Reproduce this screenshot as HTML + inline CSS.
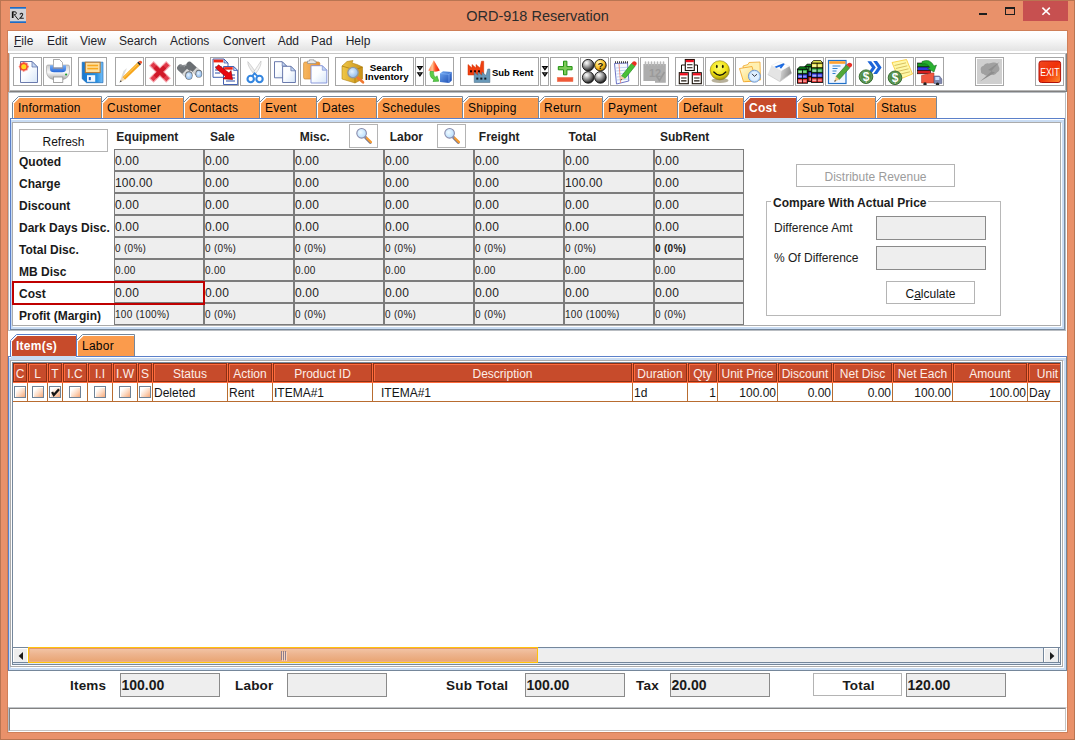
<!DOCTYPE html>
<html><head><meta charset="utf-8"><title>ORD-918 Reservation</title>
<style>
*{box-sizing:border-box;margin:0;padding:0}
html,body{width:1075px;height:740px;overflow:hidden}
body{background:#e9916a;font-family:"Liberation Sans",sans-serif;font-size:12px;color:#1c1c1c;position:relative}
.abs{position:absolute}
#frame{position:absolute;left:0;top:0;width:1075px;height:740px;border:1px solid #b97552}
#title{position:absolute;left:0;top:6px;width:1075px;text-align:center;font-size:14.5px;color:#2c2c2c;line-height:20px;transform:scaleY(1.06);transform-origin:50% 78%}
#menubar{position:absolute;left:8px;top:31px;width:1059px;height:22px;background:linear-gradient(#ffffff 0%,#fbfbfb 30%,#e3e3e3 90%,#ffffff 93%)}
#menubar span{position:absolute;top:3px;line-height:14px;font-size:12px;color:#1f1f2a}
#toolbar{position:absolute;left:9px;top:53px;width:1058px;height:39px;background:#fff;border:1px solid;border-color:#c6c6c6 #7c8084 #808080 #c6c6c6;box-shadow:inset -1px -1px 0 #b6b6b6}
.tb{position:absolute;top:57px;width:29px;height:29px;border:1px solid #a6a6a6;background:#fff;overflow:hidden}
.tb svg{position:absolute;left:-1px;top:-1px}
#client{position:absolute;left:8px;top:92px;width:1059px;height:640px;background:#fff}
.tabt{font-size:12px;line-height:14px;white-space:nowrap;color:#050505;letter-spacing:0.25px}
.btn{border:1px solid #b4b4b4;background:#fff;text-align:center;white-space:nowrap;color:#141414}
.hd{font-weight:bold;font-size:12px;line-height:14px;white-space:nowrap;color:#222}
.rl{font-weight:bold;font-size:12px;line-height:14px;white-space:nowrap;color:#1a1a1a}
.cell{width:90px;height:22px;border:1px solid #7c7c7c;background:#eeeeee;font-size:12px;line-height:22px;padding-left:0px;white-space:nowrap;color:#222;overflow:visible;letter-spacing:0.15px}
.cell.sm{font-size:10px;line-height:21px;letter-spacing:0.3px}
.fld{border:1px solid #8a8a8a;background:#eeeeee}
.fv{font-weight:bold;font-size:14px;line-height:23px;padding-left:0.5px;color:#1a1a1a}
.fl{font-weight:bold;font-size:13.5px;line-height:16px;white-space:nowrap;color:#1a1a1a;letter-spacing:0.2px}
.th{height:19px;background:#c74b2b;border:1px solid #8c3014;box-shadow:inset 1px 1px 0 #ff6b3d;color:#fdeee8;text-align:center;font-size:12px;line-height:20px;white-space:nowrap;overflow:hidden}
.td{height:18px;border-right:1px solid #b86c30;font-size:12px;line-height:20px;white-space:nowrap;overflow:hidden;color:#141414}
.cb{width:12px;height:12px;border:1px solid #6f8296;background:linear-gradient(135deg,#ffffff 22%,#fddcc6 58%,#f6a878 100%);box-shadow:inset 1px 1px 0 #fff}
.sbb{width:15px;height:15px;background:#f2f2f2;border:1px solid #fff;outline:1px solid #9fb1cc;outline-offset:-1px}

</style></head><body>
<div id="frame"></div>
<div class="abs" style="left:7px;top:30px;width:1061px;height:703px;background:#cf7f58"></div>
<svg class="abs" style="left:10px;top:7px" width="16" height="16" viewBox="0 0 16 16"><rect width="16" height="16" fill="#d2d2d6"/><rect width="16" height="1.7" fill="#1c6cc6"/><rect y="14.3" width="16" height="1.7" fill="#1c6cc6"/><path d="M2.7,4.4 V11" stroke="#101010" stroke-width="1.7"/><path d="M3,4.8 H5 Q6.6,5 6.4,6.4 Q6.2,7.6 4.2,7.6 L8.6,13" fill="none" stroke="#202020" stroke-width="1"/><path d="M9.8,7.4 Q11.4,5.6 12.6,6.8 Q13.2,8 10,11.2 H13.8" fill="none" stroke="#202020" stroke-width="1.1"/></svg>
<div id="title">ORD-918 Reservation</div>
<div class="abs" style="left:979px;top:13px;width:8px;height:2px;background:#1e1e1e"></div>
<div class="abs" style="left:1005px;top:7px;width:10px;height:8px;border:1px solid #1e1e1e;border-top-width:2px"></div>
<div class="abs" style="left:1023px;top:1px;width:45px;height:20px;background:#c75050"></div>
<svg class="abs" style="left:1041px;top:6px" width="10" height="10" viewBox="0 0 10 10"><path d="M1.4,1.6 L8.8,8.8 M8.8,1.6 L1.4,8.8" stroke="#fff" stroke-width="1.6"/></svg>
<div id="menubar"><span style="left:6px"><u>F</u>ile</span><span style="left:39px">Edit</span><span style="left:72px">View</span><span style="left:111px">Search</span><span style="left:162px">Actions</span><span style="left:215px">Convert</span><span style="left:269.7px">Add</span><span style="left:303px">Pad</span><span style="left:337.7px">Help</span></div>
<div id="toolbar"></div>
<div id="client"></div>

<svg width="0" height="0" style="position:absolute">
<defs>
<linearGradient id="gPage" x1="0" y1="0" x2="1" y2="1"><stop offset="0" stop-color="#ffffff"/><stop offset="0.45" stop-color="#fbfdff"/><stop offset="1" stop-color="#d6e5f8"/></linearGradient>
<radialGradient id="gStar"><stop offset="0" stop-color="#fff040"/><stop offset="0.35" stop-color="#ffb020"/><stop offset="0.6" stop-color="#f03020"/><stop offset="1" stop-color="#f03020" stop-opacity="0"/></radialGradient>
<linearGradient id="gPrn" x1="0" y1="0" x2="0" y2="1"><stop offset="0" stop-color="#c8c8c8"/><stop offset="0.5" stop-color="#fafafa"/><stop offset="1" stop-color="#a8a8a8"/></linearGradient>
<linearGradient id="gBlue" x1="0" y1="0" x2="0" y2="1"><stop offset="0" stop-color="#78b0f8"/><stop offset="1" stop-color="#2868d8"/></linearGradient>
<linearGradient id="gFlop" x1="0" y1="0" x2="1" y2="0"><stop offset="0" stop-color="#1878d0"/><stop offset="0.7" stop-color="#2890e0"/><stop offset="1" stop-color="#78c0f8"/></linearGradient>
<radialGradient id="gBall" cx="0.36" cy="0.3" r="0.75"><stop offset="0" stop-color="#ffffff"/><stop offset="0.22" stop-color="#d4d4d4"/><stop offset="0.6" stop-color="#787878"/><stop offset="1" stop-color="#0c0c0c"/></radialGradient>
<radialGradient id="gBallY" cx="0.36" cy="0.3" r="0.75"><stop offset="0" stop-color="#fffce0"/><stop offset="0.3" stop-color="#ffdc60"/><stop offset="0.7" stop-color="#f0b018"/><stop offset="1" stop-color="#705000"/></radialGradient>
<radialGradient id="gSmile" cx="0.45" cy="0.35" r="0.7"><stop offset="0" stop-color="#ffff70"/><stop offset="0.6" stop-color="#f0e010"/><stop offset="1" stop-color="#8a7a10"/></radialGradient>
<radialGradient id="gLens" cx="0.4" cy="0.4" r="0.7"><stop offset="0" stop-color="#e8f4ff"/><stop offset="1" stop-color="#80b0e8"/></radialGradient>
<radialGradient id="gLens2" cx="0.4" cy="0.4" r="0.75"><stop offset="0" stop-color="#f0faff"/><stop offset="0.6" stop-color="#c6e6ff"/><stop offset="1" stop-color="#a4d0f8"/></radialGradient>
<linearGradient id="gExit" x1="0" y1="0" x2="1" y2="1"><stop offset="0" stop-color="#f04820"/><stop offset="0.5" stop-color="#f03008"/><stop offset="1" stop-color="#ff9030"/></linearGradient>
<linearGradient id="gClip" x1="0" y1="0" x2="1" y2="0"><stop offset="0" stop-color="#f8b860"/><stop offset="1" stop-color="#e89030"/></linearGradient>
<linearGradient id="gBox" x1="0" y1="0" x2="1" y2="0"><stop offset="0" stop-color="#f0c848"/><stop offset="1" stop-color="#c89018"/></linearGradient>
<linearGradient id="gCone" x1="0" y1="0" x2="1" y2="0"><stop offset="0" stop-color="#ff7848"/><stop offset="0.35" stop-color="#ffc090"/><stop offset="0.6" stop-color="#ff5828"/><stop offset="1" stop-color="#e01808"/></linearGradient>
<linearGradient id="gCube" x1="0" y1="0" x2="1" y2="1"><stop offset="0" stop-color="#70a8f0"/><stop offset="1" stop-color="#1848b0"/></linearGradient>
<linearGradient id="gKeyR" x1="0" y1="0" x2="1" y2="0.3"><stop offset="0" stop-color="#e0e0e0"/><stop offset="1" stop-color="#8c8c8c"/></linearGradient>
<linearGradient id="gKey" x1="0" y1="0" x2="1" y2="1"><stop offset="0" stop-color="#ffffff"/><stop offset="1" stop-color="#b0b0b0"/></linearGradient>
<linearGradient id="gFold" x1="0" y1="0" x2="1" y2="1"><stop offset="0" stop-color="#fffce0"/><stop offset="1" stop-color="#ffd860"/></linearGradient>
</defs></svg>
<div class="tb" style="left:13px;width:29px;"><svg width="29" height="29" viewBox="13 57 29 29"><path d="M20.5,61.5 L32,61.5 L37.5,67 L37.5,82.5 L20.5,82.5 Z" fill="url(#gPage)" stroke="#5a6ca4" stroke-width="0.9"/><path d="M32,61.5 L32,67 L37.5,67 Z" fill="#c4d8f4" stroke="#5a6ca4" stroke-width="0.7"/><circle cx="23.8" cy="66.6" r="5.4" fill="url(#gStar)" opacity="0.8"/><path d="M23.8,61.2 l1.2,2.6 l2.7,-1 l-1,2.7 l2.6,1.2 l-2.6,1.2 l1,2.7 l-2.7,-1 l-1.2,2.6 l-1.2,-2.6 l-2.7,1 l1,-2.7 l-2.6,-1.2 l2.6,-1.2 l-1,-2.7 l2.7,1 Z" fill="#f8381c" opacity="0.6"/><circle cx="23.8" cy="66.7" r="2.5" fill="#ffd820"/></svg></div>
<div class="tb" style="left:43px;width:29px;"><svg width="29" height="29" viewBox="43 57 29 29"><path d="M53.5,59.5 H59.5 L62.5,62.5 V69 H53.5 Z" fill="#fff" stroke="#a0a0a0" stroke-width="0.8"/><path d="M46.5,66.5 Q46.5,65 48,65 H68 Q69.5,65 69.5,66.5 V71 Q69.5,78 63,79.5 H53 Q46.5,78 46.5,71 Z" fill="url(#gPrn)" stroke="#9a9a9a" stroke-width="0.6"/><path d="M50,65.3 H66 V69 Q66,72.2 62,72.2 H54 Q50,72.2 50,69 Z" fill="url(#gBlue)"/><rect x="53.5" y="62" width="9" height="6" fill="#fff"/><path d="M53.5,59.5 H59.5 L62.5,62.5 V68 M53.5,68 V59.5" fill="none" stroke="#a8a8a8" stroke-width="0.8"/><rect x="53" y="67.3" width="10" height="1.6" fill="#8890a8"/><rect x="53.5" y="77" width="9.3" height="5.5" fill="#fff" stroke="#909090" stroke-width="0.8"/><circle cx="66.1" cy="74.5" r="1.1" fill="#20a030"/></svg></div>
<div class="tb" style="left:78px;width:29px;"><svg width="29" height="29" viewBox="78 57 29 29"><path d="M82.2,62.2 H103 V82.7 H86.5 L82.2,78.8 Z" fill="url(#gFlop)" stroke="#1060b0" stroke-width="0.6"/><rect x="85.3" y="62.2" width="14.8" height="10.4" fill="#ffe0a0" stroke="#b87830" stroke-width="1"/><rect x="87.3" y="64.7" width="10.8" height="1.6" fill="#f8a820"/><rect x="87.3" y="67.8" width="10.8" height="1.6" fill="#f8a820"/><rect x="87" y="75.2" width="8.2" height="6.6" fill="#f4f8ff"/><rect x="88.8" y="77" width="2" height="3.2" fill="#1860c0"/></svg></div>
<div class="tb" style="left:115px;width:29px;"><svg width="29" height="29" viewBox="115 57 29 29"><path d="M119.5,82.5 L123.5,71 L127,68 L122,80 Z" fill="#c0c0c0" opacity="0.55"/><path d="M122.4,77.2 L137.2,62.8 L139.8,65.4 L125,79.8 Z" fill="#f7a51c"/><path d="M123.4,78 L138.2,63.6" stroke="#ffd468" stroke-width="0.9"/><path d="M137.2,62.8 L138.5,61.5 L141.1,64.1 L139.8,65.4 Z" fill="#2c2c2c"/><path d="M138.5,61.5 Q140.3,59.9 141.7,61.3 Q143,62.6 141.1,64.1 Z" fill="#f4502c"/><path d="M122.4,77.2 L125,79.8 L119.6,82.4 Z" fill="#f0d8b0"/><path d="M119.6,82.4 L120.7,80.2 L121.9,81.3 Z" fill="#303030"/></svg></div>
<div class="tb" style="left:145px;width:29px;"><svg width="29" height="29" viewBox="145 57 29 29"><g stroke-linecap="butt"><path d="M151.3,63.3 L168.5,80.5 M168.5,63.3 L151.3,80.5" stroke="#f4a4ac" stroke-width="6.6"/><path d="M152,64 L167.8,79.8 M167.8,64 L152,79.8" stroke="#e03848" stroke-width="4.2"/><path d="M155,67 L164.8,76.8 M164.8,67 L155,76.8" stroke="#d01828" stroke-width="4.2"/></g></svg></div>
<div class="tb" style="left:175px;width:29px;"><svg width="29" height="29" viewBox="175 57 29 29"><path d="M189.5,65 L198.3,73.2" stroke="#6a6e72" stroke-width="6.4" stroke-linecap="round"/><path d="M180.6,68 L188.6,75.2" stroke="#72767a" stroke-width="7" stroke-linecap="round"/><path d="M184,66 L192,65 L193,70 L187,71.5 Z" fill="#6c7074"/><path d="M194.6,69.6 L197.4,72.2" stroke="#d4d4d4" stroke-width="6.6"/><path d="M184.6,71.4 L187.6,74.2" stroke="#dcdcdc" stroke-width="7.2"/><path d="M180,66 L186,65.2" stroke="#8c9094" stroke-width="1.2"/><ellipse cx="198.8" cy="73.7" rx="3.4" ry="3.9" fill="#686c70"/><ellipse cx="188.9" cy="75.5" rx="3.7" ry="4.2" fill="#686c70"/><ellipse cx="198.9" cy="73.9" rx="2.7" ry="3.2" fill="url(#gLens)"/><ellipse cx="189" cy="75.7" rx="3" ry="3.5" fill="url(#gLens)"/></svg></div>
<div class="tb" style="left:210px;width:29px;"><svg width="29" height="29" viewBox="210 57 29 29"><path d="M213,59 L224,59 L228,63 L228,77.3 L213,77.3 Z" fill="#fff" stroke="#3050a8" stroke-width="0.9"/><path d="M224,59 L224,63 L228,63 Z" fill="#c4d8f4" stroke="#3050a8" stroke-width="0.7"/><rect x="213.6" y="59.6" width="9.5" height="2.8" fill="#f02818"/><path d="M215,67 H222 M215,70 H222 M215,73 H220" stroke="#3050a8" stroke-width="1"/><path d="M223.5,66.5 L233.7,66.5 L237.7,70.5 L237.7,84.5 L223.5,84.5 Z" fill="#fff" stroke="#3050a8" stroke-width="0.9"/><path d="M233.7,66.5 L233.7,70.5 L237.7,70.5 Z" fill="#c4d8f4" stroke="#3050a8" stroke-width="0.7"/><rect x="224.1" y="67.1" width="8.6" height="2.6" fill="#f02818"/><path d="M226,75 H235 M226,78 H235 M226,81 H235" stroke="#3050a8" stroke-width="1"/><path d="M215.5,68 L218.5,64.8 L229,73 L231,70.5 L232.5,79.5 L223,78.8 L225.5,76.5 Z" fill="#e80810" stroke="#900000" stroke-width="0.6"/></svg></div>
<div class="tb" style="left:240px;width:29px;"><svg width="29" height="29" viewBox="240 57 29 29"><path d="M247.8,61.6 Q247.4,66.5 254.3,74.4 L256,72.6 Q250.4,64.4 247.8,61.6 Z" fill="#ececec" stroke="#b0b0b0" stroke-width="0.5"/><path d="M261,61 Q261.8,66.5 254.9,74.4 L253.2,72.6 Q258.8,64.4 261,61 Z" fill="#f4f4f4" stroke="#b0b0b0" stroke-width="0.5"/><circle cx="250.7" cy="79" r="3.2" fill="none" stroke="#3486e0" stroke-width="2.1"/><circle cx="259.5" cy="79" r="3.2" fill="none" stroke="#3486e0" stroke-width="2.1"/><path d="M252.2,76.2 L254.6,73.4 L257.4,76.2" fill="none" stroke="#3486e0" stroke-width="1.8"/></svg></div>
<div class="tb" style="left:270px;width:29px;"><svg width="29" height="29" viewBox="270 57 29 29"><path d="M274.5,61.7 L282.2,61.7 L286.7,66.2 L286.7,77.8 L274.5,77.8 Z" fill="url(#gPage)" stroke="#5a6ca4" stroke-width="0.9"/><path d="M282.2,61.7 L282.2,66.2 L286.7,66.2 Z" fill="#c4d8f4" stroke="#5a6ca4" stroke-width="0.7"/><path d="M282.6,66.3 L290.9,66.3 L295.4,70.8 L295.4,82.5 L282.6,82.5 Z" fill="url(#gPage)" stroke="#5a6ca4" stroke-width="0.9"/><path d="M290.9,66.3 L290.9,70.8 L295.4,70.8 Z" fill="#c4d8f4" stroke="#5a6ca4" stroke-width="0.7"/></svg></div>
<div class="tb" style="left:300px;width:29px;"><svg width="29" height="29" viewBox="300 57 29 29"><rect x="303.6" y="62" width="16.2" height="17" rx="1.5" fill="url(#gClip)" stroke="#c88838" stroke-width="0.7"/><path d="M307.5,63.5 V61 H309.5 V59.8 H314 V61 H316 V63.5 Z" fill="#e8e8e8" stroke="#909090" stroke-width="0.7"/><path d="M311,65.7 L322.3,65.7 L326.8,70.2 L326.8,83 L311,83 Z" fill="url(#gPage)" stroke="#8090d8" stroke-width="0.9"/><path d="M322.3,65.7 L322.3,70.2 L326.8,70.2 Z" fill="#c4d8f4" stroke="#8090d8" stroke-width="0.7"/></svg></div>
<div class="tb" style="left:335px;width:79px;"><svg width="79" height="29" viewBox="335 57 79 29"><path d="M342,66 L347,61.5 L353,60.5 L352,63 L357,64.5 L362.5,67 L362.5,79 L355,83 L342,79 Z" fill="url(#gBox)" stroke="#b08010" stroke-width="0.6"/><path d="M342,66 L355,70 L362.5,67 M355,70 V83" fill="none" stroke="#a87808" stroke-width="0.7"/><path d="M357,77 L363,82.3" stroke="#f07830" stroke-width="2.6" stroke-linecap="round"/><circle cx="353" cy="72.6" r="5.2" fill="url(#gLens)" stroke="#9098a0" stroke-width="1.3"/><text x="369.8" y="71" font-family="Liberation Sans" font-weight="bold" font-size="9.5" fill="#000" textLength="32.8" lengthAdjust="spacingAndGlyphs">Search</text><text x="365.1" y="80" font-family="Liberation Sans" font-weight="bold" font-size="9.5" fill="#000" textLength="43.6" lengthAdjust="spacingAndGlyphs">Inventory</text></svg></div>
<div class="tb" style="left:415px;width:9px;"><svg width="9" height="29" viewBox="415 57 9 29"><path d="M416.6,66.1 h6.6 l-3.3,4.7 Z M416.6,72.2 h6.6 l-3.3,4.7 Z" fill="#050505"/><rect x="419.4" y="67.2" width="1" height="1" fill="#ccc"/><rect x="419.4" y="73.3" width="1" height="1" fill="#ccc"/></svg></div>
<div class="tb" style="left:425px;width:29px;"><svg width="29" height="29" viewBox="425 57 29 29"><path d="M433.8,60.3 L439.8,70.5 Q434,73 428.3,70.5 Z" fill="url(#gCone)"/><path d="M430,71.5 Q429.5,78 434,79.5 L433,81.5 L438.8,81.2 L437,75.8 L436,77.6 Q433,76 433.5,71.5 Z" fill="#5ccc48" stroke="#2ea028" stroke-width="0.6"/><path d="M440,73.5 L443,71.3 L451.8,72 L451.8,80.5 L449,83 L440,82 Z" fill="url(#gCube)"/><path d="M440,73.5 L449,74.3 L451.8,72 M449,74.3 V83" fill="none" stroke="#90c0ff" stroke-width="0.6"/></svg></div>
<div class="tb" style="left:460px;width:79px;"><svg width="79" height="29" viewBox="460 57 79 29"><path d="M468,75 V64.5 L472,68 V64.5 L476,68 V64.5 L480,68 L481.5,61.2 H483.7 V75 Z" fill="#f04010" stroke="#d03000" stroke-width="0.5"/><rect x="470" y="70.3" width="2" height="2" fill="#200"/><rect x="474" y="70.3" width="2" height="2" fill="#200"/><rect x="478" y="70.3" width="2" height="2" fill="#200"/><path d="M474.2,82.5 V72 L478,75.5 V72 L482,75.5 V72 L486,75.5 L487.8,69 H489.9 V82.5 Z" fill="#6898b8" stroke="#486880" stroke-width="0.5"/><rect x="476.3" y="77.6" width="2" height="2" fill="#101820"/><rect x="480.3" y="77.6" width="2" height="2" fill="#101820"/><rect x="484.3" y="77.6" width="2" height="2" fill="#101820"/><text x="491.9" y="75.8" font-family="Liberation Sans" font-weight="bold" font-size="9.8" fill="#000" textLength="41.6" lengthAdjust="spacingAndGlyphs">Sub Rent</text></svg></div>
<div class="tb" style="left:540px;width:9px;"><svg width="9" height="29" viewBox="540 57 9 29"><path d="M541.6,66.1 h6.6 l-3.3,4.7 Z M541.6,72.2 h6.6 l-3.3,4.7 Z" fill="#050505"/><rect x="544.4" y="67.2" width="1" height="1" fill="#ccc"/><rect x="544.4" y="73.3" width="1" height="1" fill="#ccc"/></svg></div>
<div class="tb" style="left:550px;width:29px;"><svg width="29" height="29" viewBox="550 57 29 29"><path d="M563.5,61.2 h3.4 v5.4 h5.2 v3.2 h-5.2 v5 h-3.4 v-5 h-5.2 v-3.2 h5.2 Z" fill="#7ccc58" stroke="#209010" stroke-width="1"/><rect x="557.2" y="77.3" width="15.8" height="4.4" fill="#f05838" stroke="#f08060" stroke-width="0.5"/></svg></div>
<div class="tb" style="left:580px;width:29px;"><svg width="29" height="29" viewBox="580 57 29 29"><circle cx="588.2" cy="65.2" r="5.8" fill="url(#gBall)" stroke="#101010" stroke-width="0.9"/><circle cx="600.4" cy="65.2" r="5.8" fill="url(#gBallY)" stroke="#101010" stroke-width="0.9"/><circle cx="588.2" cy="77.4" r="5.8" fill="url(#gBall)" stroke="#101010" stroke-width="0.9"/><circle cx="600.4" cy="77.4" r="5.8" fill="url(#gBall)" stroke="#101010" stroke-width="0.9"/><text x="600.4" y="68.8" font-family="Liberation Sans" font-weight="bold" font-size="9.5" fill="#201000" text-anchor="middle">?</text></svg></div>
<div class="tb" style="left:610px;width:29px;"><svg width="29" height="29" viewBox="610 57 29 29"><path d="M614.5,63.5 L627.5,63 L628.8,81 L616.5,84 Z" fill="#f8fbff" stroke="#6068c0" stroke-width="0.9"/><path d="M616,68 L627.7,67.2 M616.2,71 L628,70 M616.4,74 L628.2,73 M616.6,77 L628.4,76 M616.8,80 L628.6,79" stroke="#a8c0f0" stroke-width="0.7"/><path d="M619,64 L620.6,83" stroke="#f08070" stroke-width="0.8"/><path d="M615,62.2 h13" stroke="#404040" stroke-width="2" stroke-dasharray="1,1"/><path d="M621.5,76 L631.5,63.5 L635,66.2 L625,78.5 Z" fill="#48c038" stroke="#208018" stroke-width="0.6"/><path d="M631.5,63.5 Q633.5,60 636,62 Q637.8,63.8 635,66.2 Z" fill="#e83020"/><path d="M621.5,76 L625,78.5 L620.5,80.5 Z" fill="#f0d0a0"/><path d="M620.5,80.5 l0.5,-1.6 l1.2,0.9 Z" fill="#202020"/></svg></div>
<div class="tb" style="left:640px;width:29px;"><svg width="29" height="29" viewBox="640 57 29 29"><path d="M643.4,64 H665.8 V82.8 H655 V81 H643.4 Z" fill="#adadad"/><path d="M645.5,62 v3 M648.5,62 v3 M651.5,62 v3 M654.5,62 v3 M657.5,62 v3 M660.5,62 v3 M663.5,62 v3" stroke="#b8b8b8" stroke-width="1.6" stroke-linecap="round"/><text x="655" y="77" font-family="Liberation Sans" font-weight="bold" font-size="11" fill="#9a9a9a" text-anchor="middle">12</text><path d="M656.5,76 L659.5,80.5 L664.5,72" fill="none" stroke="#989898" stroke-width="1.6"/></svg></div>
<div class="tb" style="left:675px;width:29px;"><svg width="29" height="29" viewBox="675 57 29 29"><path d="M685,65 H681.5 V73 M694.5,65 H697.5 V73" fill="none" stroke="#181008" stroke-width="1"/><rect x="685.3" y="59.5" width="9" height="11" fill="#fff" stroke="#181008" stroke-width="1.1"/><rect x="685.8" y="59.9" width="8" height="2.3" fill="#f01020"/><path d="M687.1,64.8 h5.4 M687.1,67.7 h5.4" stroke="#181008" stroke-width="1.1"/><rect x="679.3" y="72.7" width="9" height="11" fill="#fff" stroke="#181008" stroke-width="1.1"/><rect x="679.8" y="73.1" width="8" height="2.3" fill="#f01020"/><path d="M681.1,78 h5.4 M681.1,80.9 h5.4" stroke="#181008" stroke-width="1.1"/><rect x="692.3" y="72.7" width="9" height="11" fill="#fff" stroke="#181008" stroke-width="1.1"/><rect x="692.8" y="73.1" width="8" height="2.3" fill="#f01020"/><path d="M694.1,78 h5.4 M694.1,80.9 h5.4" stroke="#181008" stroke-width="1.1"/></svg></div>
<div class="tb" style="left:705px;width:29px;"><svg width="29" height="29" viewBox="705 57 29 29"><ellipse cx="720" cy="80.5" rx="8.5" ry="2.5" fill="#605020" opacity="0.45"/><circle cx="719.8" cy="70.3" r="9.6" fill="url(#gSmile)" stroke="#8a7a18" stroke-width="0.6"/><ellipse cx="716.8" cy="66.5" rx="0.9" ry="1.8" fill="#181808"/><ellipse cx="722.8" cy="66.5" rx="0.9" ry="1.8" fill="#181808"/><path d="M713.8,72 Q719.8,78.5 725.8,72" fill="none" stroke="#181808" stroke-width="1.3" stroke-linecap="round"/></svg></div>
<div class="tb" style="left:735px;width:29px;"><svg width="29" height="29" viewBox="735 57 29 29"><path d="M743,66 L748,64.5 L749,62.5 L760,62 L760.5,80 L745,81.5 Z" fill="#fff0b0" stroke="#f0a830" stroke-width="0.8"/><path d="M739.5,68.5 L752,66.5 L756,81 L743.5,81.8 Z" fill="url(#gFold)" stroke="#f0a020" stroke-width="0.8"/><circle cx="754.4" cy="76.2" r="6" fill="#b8dcff" stroke="#7898c8" stroke-width="1"/><circle cx="754.4" cy="76.2" r="4.6" fill="#e0f0ff"/><path d="M752,73.8 L754.4,76.4 L757,74.2" fill="none" stroke="#202838" stroke-width="0.9"/></svg></div>
<div class="tb" style="left:765px;width:29px;"><svg width="29" height="29" viewBox="765 57 29 29"><path d="M771.5,65.5 L767.7,74.5 L779.9,81.6 L781.3,70.7 Z" fill="#e4e4e4"/><path d="M781.3,70.7 L789.4,66.1 L791.7,73.3 L779.9,81.6 Z" fill="url(#gKeyR)"/><path d="M771.5,65.5 L779,61.8 L789.4,66.1 L781.3,70.7 Z" fill="#fdfdfd" stroke="#e0e0e0" stroke-width="0.4"/><path d="M767.7,74.5 L779.9,81.6 L791.7,73.3" fill="none" stroke="#c4c4c4" stroke-width="0.7"/><path d="M774.5,66.8 L783.5,63.2 L784.8,64 L781.2,68.6 L779.6,68 L780.6,66.6 L778,67.2 L776.4,68 Z" fill="#1c6ae0"/></svg></div>
<div class="tb" style="left:795px;width:29px;"><svg width="29" height="29" viewBox="795 57 29 29"><rect x="805" y="66.6" width="7.5" height="5" fill="#28a030" stroke="#060606" stroke-width="0.9"/><rect x="806" y="68.2" width="2.15" height="2.2" fill="#fff" opacity="0.6"/><rect x="809.35" y="68.2" width="1.95" height="2.2" fill="#fff" opacity="0.45"/><path d="M808.75,66.6 v5" stroke="#060606" stroke-width="0.8"/><path d="M805,66.6 l2,-2.4 h3.5 l2,2.4 Z" fill="#0a8818" stroke="#060606" stroke-width="0.8"/><rect x="805" y="71.6" width="7.5" height="5" fill="#3038e8" stroke="#060606" stroke-width="0.9"/><rect x="806" y="73.2" width="2.15" height="2.2" fill="#fff" opacity="0.6"/><rect x="809.35" y="73.2" width="1.95" height="2.2" fill="#fff" opacity="0.45"/><path d="M808.75,71.6 v5" stroke="#060606" stroke-width="0.8"/><rect x="805" y="76.6" width="7.5" height="5" fill="#e82828" stroke="#060606" stroke-width="0.9"/><rect x="806" y="78.2" width="2.15" height="2.2" fill="#fff" opacity="0.6"/><rect x="809.35" y="78.2" width="1.95" height="2.2" fill="#fff" opacity="0.45"/><path d="M808.75,76.6 v5" stroke="#060606" stroke-width="0.8"/><rect x="811.4" y="63" width="11.4" height="5" fill="#e8e030" stroke="#060606" stroke-width="0.9"/><rect x="812.4" y="64.6" width="4.1" height="2.2" fill="#fff" opacity="0.6"/><rect x="817.7" y="64.6" width="3.9" height="2.2" fill="#fff" opacity="0.45"/><path d="M817.1,63 v5" stroke="#060606" stroke-width="0.8"/><path d="M811.4,63 l2,-2.4 h7.4 l2,2.4 Z" fill="#f0f050" stroke="#060606" stroke-width="0.8"/><rect x="811.4" y="68" width="11.4" height="5" fill="#28a838" stroke="#060606" stroke-width="0.9"/><rect x="812.4" y="69.6" width="4.1" height="2.2" fill="#fff" opacity="0.6"/><rect x="817.7" y="69.6" width="3.9" height="2.2" fill="#fff" opacity="0.45"/><path d="M817.1,68 v5" stroke="#060606" stroke-width="0.8"/><rect x="811.4" y="73" width="11.4" height="4.8" fill="#3038e8" stroke="#060606" stroke-width="0.9"/><rect x="812.4" y="74.6" width="4.1" height="2" fill="#fff" opacity="0.6"/><rect x="817.7" y="74.6" width="3.9" height="2" fill="#fff" opacity="0.45"/><path d="M817.1,73 v4.8" stroke="#060606" stroke-width="0.8"/><rect x="811.4" y="77.8" width="11.4" height="4.6" fill="#f03030" stroke="#060606" stroke-width="0.9"/><rect x="812.4" y="79.4" width="4.1" height="1.8" fill="#fff" opacity="0.6"/><rect x="817.7" y="79.4" width="3.9" height="1.8" fill="#fff" opacity="0.45"/><path d="M817.1,77.8 v4.6" stroke="#060606" stroke-width="0.8"/><rect x="797.5" y="69.2" width="10" height="4.8" fill="#28a838" stroke="#060606" stroke-width="0.9"/><rect x="798.5" y="70.8" width="3.4" height="2" fill="#fff" opacity="0.6"/><rect x="803.1" y="70.8" width="3.2" height="2" fill="#fff" opacity="0.45"/><path d="M802.5,69.2 v4.8" stroke="#060606" stroke-width="0.8"/><path d="M797.5,69.2 l2,-2.4 h6 l2,2.4 Z" fill="#089018" stroke="#060606" stroke-width="0.8"/><rect x="797.5" y="74" width="10" height="4.6" fill="#3038e8" stroke="#060606" stroke-width="0.9"/><rect x="798.5" y="75.6" width="3.4" height="1.8" fill="#fff" opacity="0.6"/><rect x="803.1" y="75.6" width="3.2" height="1.8" fill="#fff" opacity="0.45"/><path d="M802.5,74 v4.6" stroke="#060606" stroke-width="0.8"/><rect x="797.5" y="78.6" width="10" height="4.6" fill="#f03030" stroke="#060606" stroke-width="0.9"/><rect x="798.5" y="80.2" width="3.4" height="1.8" fill="#fff" opacity="0.6"/><rect x="803.1" y="80.2" width="3.2" height="1.8" fill="#fff" opacity="0.45"/><path d="M802.5,78.6 v4.6" stroke="#060606" stroke-width="0.8"/></svg></div>
<div class="tb" style="left:825px;width:29px;"><svg width="29" height="29" viewBox="825 57 29 29"><rect x="828.5" y="60.5" width="17.5" height="23" fill="#f0f6ff" stroke="#2070c8" stroke-width="1.2"/><rect x="829.2" y="61.2" width="16.2" height="2.6" fill="#ffa030"/><path d="M832.5,66 h8 M832.5,68.5 h5 M832.5,71 h4 M832.5,73.5 h3" stroke="#3080d0" stroke-width="1"/><path d="M836,76.5 L846.5,64.8 L849.8,67.8 L839.3,79.5 Z" fill="#50a838" stroke="#306820" stroke-width="0.6"/><path d="M846.5,64.8 Q849,61.5 851.5,63.5 Q853.5,65.5 849.8,67.8 Z" fill="#e83028"/><path d="M836,76.5 L839.3,79.5 L834.3,81.8 Z" fill="#f0c880"/><path d="M834.3,81.8 l0.6,-1.8 l1.3,1 Z" fill="#202020"/></svg></div>
<div class="tb" style="left:855px;width:29px;"><svg width="29" height="29" viewBox="855 57 29 29"><path d="M867.4,61.2 h3.8 l4.6,6.3 l-4.6,6.3 h-3.8 l4.6,-6.3 Z M873.2,61 h3.8 l4.6,6.5 l-4.6,6.5 h-3.8 l4.6,-6.5 Z" fill="#1c64d8"/><circle cx="866" cy="76.7" r="6.8" fill="#4e8a45" stroke="#3c7036" stroke-width="1"/><circle cx="866" cy="76.7" r="5.5" fill="none" stroke="#6ea666" stroke-width="0.7"/><text x="866" y="80.9" font-family="Liberation Sans" font-weight="bold" font-size="12" fill="#fff" text-anchor="middle">$</text></svg></div>
<div class="tb" style="left:885px;width:29px;"><svg width="29" height="29" viewBox="885 57 29 29"><path d="M892,62.5 L906.5,59.5 L912.5,74 L899,79.5 Z" fill="#fff8a8" stroke="#f8c830" stroke-width="0.8"/><path d="M894.5,65.5 L906,62.8 M895.8,68.5 L907.3,65.8 M897.1,71.5 L908.6,68.8 M898.4,74.5 L909.9,71.8" stroke="#d8c060" stroke-width="1"/><circle cx="895" cy="77.8" r="6.8" fill="#4e8a45" stroke="#3c7036" stroke-width="1"/><circle cx="895" cy="77.8" r="5.5" fill="none" stroke="#6ea666" stroke-width="0.7"/><text x="895" y="82" font-family="Liberation Sans" font-weight="bold" font-size="12" fill="#fff" text-anchor="middle">$</text></svg></div>
<div class="tb" style="left:915px;width:29px;"><svg width="29" height="29" viewBox="915 57 29 29"><rect x="917.5" y="63" width="13" height="4" fill="#189820" stroke="#080808" stroke-width="0.6"/><rect x="917.5" y="67" width="13" height="3.4" fill="#3038e0" stroke="#080808" stroke-width="0.6"/><rect x="917.5" y="70.4" width="13" height="3.4" fill="#d82020" stroke="#080808" stroke-width="0.6"/><path d="M922,61.5 Q930,58 934,66 L936.5,65 L934,72 L927.5,68.5 L930,67.5 Q927,62.5 922,64 Z" fill="#28b030" stroke="#106018" stroke-width="0.5"/><path d="M921.5,75.5 L931,73 H934 V83 H921.5 Z" fill="#f05840" stroke="#b03020" stroke-width="0.5"/><path d="M934,76 H939.5 L941.8,79 V83.5 H934 Z" fill="#8088b0" stroke="#404870" stroke-width="0.5"/><rect x="935.3" y="77" width="4" height="3" fill="#c8e0ff"/><circle cx="925" cy="84" r="1.7" fill="#202020"/><circle cx="937.5" cy="84.3" r="1.7" fill="#202020"/></svg></div>
<div class="tb" style="left:975px;width:29px;background:#fff"><svg width="29" height="29" viewBox="975 57 29 29"><rect x="977" y="59" width="25" height="25" fill="#cfcfcf"/><path d="M981,71 Q979.5,67 983.5,65.8 Q985,62.5 989,63.5 L993,62.5 Q998,62 998.5,66 Q1001,70 997,72.5 Q995,76 991,74.5 Q986,77 983.5,74 Q980.5,73.5 981,71 Z" fill="#a0a0a0"/><path d="M999.5,62 L988,70 L992,71 L980,81.5 L995,72.5 L991,71.2 Z" fill="#8e8e8e"/></svg></div>
<div class="tb" style="left:1035px;width:29px;"><svg width="29" height="29" viewBox="1035 57 29 29"><rect x="1039" y="61" width="21.6" height="21.5" rx="2.5" fill="url(#gExit)" stroke="#b01008" stroke-width="1"/><text x="1049.9" y="75.9" font-family="Liberation Sans" font-size="10.2" fill="#fff" text-anchor="middle" textLength="19.4" lengthAdjust="spacingAndGlyphs">EXIT</text></svg></div>
<svg class="abs" style="left:0;top:92px" width="1075" height="30" viewBox="0 92 1075 30"><path d="M12.5,118 L12.5,102.5 L18.5,96.5 L101.5,96.5 L101.5,118" fill="#fff" stroke="#75879b" stroke-width="1"/><path d="M14,118 L14,103.4 L19.4,98 L101,98 L101,118 Z" fill="#fb9b4c"/><path d="M101.5,118 L101.5,102.5 L107.5,96.5 L183.5,96.5 L183.5,118" fill="#fff" stroke="#75879b" stroke-width="1"/><path d="M103,118 L103,103.4 L108.4,98 L183,98 L183,118 Z" fill="#fb9b4c"/><path d="M183.5,118 L183.5,102.5 L189.5,96.5 L259.5,96.5 L259.5,118" fill="#fff" stroke="#75879b" stroke-width="1"/><path d="M185,118 L185,103.4 L190.4,98 L259,98 L259,118 Z" fill="#fb9b4c"/><path d="M259.5,118 L259.5,102.5 L265.5,96.5 L316.5,96.5 L316.5,118" fill="#fff" stroke="#75879b" stroke-width="1"/><path d="M261,118 L261,103.4 L266.4,98 L316,98 L316,118 Z" fill="#fb9b4c"/><path d="M316.5,118 L316.5,102.5 L322.5,96.5 L376.5,96.5 L376.5,118" fill="#fff" stroke="#75879b" stroke-width="1"/><path d="M318,118 L318,103.4 L323.4,98 L376,98 L376,118 Z" fill="#fb9b4c"/><path d="M376.5,118 L376.5,102.5 L382.5,96.5 L462.5,96.5 L462.5,118" fill="#fff" stroke="#75879b" stroke-width="1"/><path d="M378,118 L378,103.4 L383.4,98 L462,98 L462,118 Z" fill="#fb9b4c"/><path d="M462.5,118 L462.5,102.5 L468.5,96.5 L538.5,96.5 L538.5,118" fill="#fff" stroke="#75879b" stroke-width="1"/><path d="M464,118 L464,103.4 L469.4,98 L538,98 L538,118 Z" fill="#fb9b4c"/><path d="M538.5,118 L538.5,102.5 L544.5,96.5 L602.5,96.5 L602.5,118" fill="#fff" stroke="#75879b" stroke-width="1"/><path d="M540,118 L540,103.4 L545.4,98 L602,98 L602,118 Z" fill="#fb9b4c"/><path d="M602.5,118 L602.5,102.5 L608.5,96.5 L677.5,96.5 L677.5,118" fill="#fff" stroke="#75879b" stroke-width="1"/><path d="M604,118 L604,103.4 L609.4,98 L677,98 L677,118 Z" fill="#fb9b4c"/><path d="M677.5,118 L677.5,102.5 L683.5,96.5 L743.5,96.5 L743.5,118" fill="#fff" stroke="#75879b" stroke-width="1"/><path d="M679,118 L679,103.4 L684.4,98 L743,98 L743,118 Z" fill="#fb9b4c"/><path d="M796.5,118 L796.5,102.5 L802.5,96.5 L875.5,96.5 L875.5,118" fill="#fff" stroke="#75879b" stroke-width="1"/><path d="M798,118 L798,103.4 L803.4,98 L875,98 L875,118 Z" fill="#fb9b4c"/><path d="M875.5,118 L875.5,102.5 L881.5,96.5 L936.5,96.5 L936.5,118" fill="#fff" stroke="#75879b" stroke-width="1"/><path d="M877,118 L877,103.4 L882.4,98 L936,98 L936,118 Z" fill="#fb9b4c"/><path d="M743.5,118 L743.5,102.5 L749.5,96.5 L796.5,96.5 L796.5,118" fill="#fff" stroke="#5b80c9" stroke-width="1"/><path d="M745,118 L745,103.4 L750.4,98 L796,98 L796,118 Z" fill="#c74b2b"/></svg>
<div class="abs tabt" style="left:18px;top:101px">Information</div><div class="abs tabt" style="left:107px;top:101px">Customer</div><div class="abs tabt" style="left:189px;top:101px">Contacts</div><div class="abs tabt" style="left:265px;top:101px">Event</div><div class="abs tabt" style="left:322px;top:101px">Dates</div><div class="abs tabt" style="left:382px;top:101px">Schedules</div><div class="abs tabt" style="left:468px;top:101px">Shipping</div><div class="abs tabt" style="left:544px;top:101px">Return</div><div class="abs tabt" style="left:608px;top:101px">Payment</div><div class="abs tabt" style="left:683px;top:101px">Default</div><div class="abs tabt" style="left:749px;top:101px;color:#fff;font-weight:bold">Cost</div><div class="abs tabt" style="left:802px;top:101px">Sub Total</div><div class="abs tabt" style="left:881px;top:101px">Status</div>
<div class="abs" style="left:8px;top:92px;width:1058px;height:239px;border:1px solid #b9bdc2"></div>
<div class="abs" style="left:10px;top:118px;width:1055px;height:212px;border:1px solid;border-color:#5b80c9 #75879b #75879b #5b80c9;background:#c9dcf3"></div><div class="abs" style="left:11px;top:119px;width:1053px;height:1px;background:#fff"></div><div class="abs" style="left:12px;top:122px;width:1049px;height:204px;border:1px solid #ababab;background:#fff;box-shadow:1px 1px 0 #fff"></div>
<div class="abs" style="left:744px;top:118px;width:52px;height:2px;background:#c9dcf3"></div>
<div class="abs btn" style="left:19px;top:129px;width:89px;height:23px;line-height:24px;font-size:12px">Refresh</div>
<div class="abs hd" style="left:116.3px;top:130px">Equipment</div><div class="abs hd" style="left:210px;top:130px">Sale</div><div class="abs hd" style="left:299.7px;top:130px">Misc.</div><div class="abs hd" style="left:389.7px;top:130px">Labor</div><div class="abs hd" style="left:478.8px;top:130px">Freight</div><div class="abs hd" style="left:568.5px;top:130px">Total</div><div class="abs hd" style="left:660px;top:130px">SubRent</div>
<div class="abs btn" style="left:349px;top:124px;width:29px;height:24px"><svg width="27" height="22" viewBox="0 0 27 22"><path d="M15.6,12.9 L20.3,17.6" stroke="#6a7090" stroke-width="2.6" stroke-linecap="round"/><path d="M16,12.2 L20.9,17.1" stroke="#f39a32" stroke-width="2.3" stroke-linecap="round"/><path d="M14.6,11.2 L16.2,12.8" stroke="#8a8ea6" stroke-width="2"/><circle cx="11.6" cy="8.3" r="4.8" fill="url(#gLens2)" stroke="#8a8cac" stroke-width="1.1"/></svg></div><div class="abs btn" style="left:437px;top:124px;width:29px;height:24px"><svg width="27" height="22" viewBox="0 0 27 22"><path d="M15.6,12.9 L20.3,17.6" stroke="#6a7090" stroke-width="2.6" stroke-linecap="round"/><path d="M16,12.2 L20.9,17.1" stroke="#f39a32" stroke-width="2.3" stroke-linecap="round"/><path d="M14.6,11.2 L16.2,12.8" stroke="#8a8ea6" stroke-width="2"/><circle cx="11.6" cy="8.3" r="4.8" fill="url(#gLens2)" stroke="#8a8cac" stroke-width="1.1"/></svg></div>
<div class="abs rl" style="left:19px;top:155px">Quoted</div><div class="abs cell" style="left:114px;top:149px">0.00</div><div class="abs cell" style="left:204px;top:149px">0.00</div><div class="abs cell" style="left:294px;top:149px">0.00</div><div class="abs cell" style="left:384px;top:149px">0.00</div><div class="abs cell" style="left:474px;top:149px">0.00</div><div class="abs cell" style="left:564px;top:149px">0.00</div><div class="abs cell" style="left:654px;top:149px">0.00</div>
<div class="abs rl" style="left:19px;top:177px">Charge</div><div class="abs cell" style="left:114px;top:171px">100.00</div><div class="abs cell" style="left:204px;top:171px">0.00</div><div class="abs cell" style="left:294px;top:171px">0.00</div><div class="abs cell" style="left:384px;top:171px">0.00</div><div class="abs cell" style="left:474px;top:171px">0.00</div><div class="abs cell" style="left:564px;top:171px">100.00</div><div class="abs cell" style="left:654px;top:171px">0.00</div>
<div class="abs rl" style="left:19px;top:199px">Discount</div><div class="abs cell" style="left:114px;top:193px">0.00</div><div class="abs cell" style="left:204px;top:193px">0.00</div><div class="abs cell" style="left:294px;top:193px">0.00</div><div class="abs cell" style="left:384px;top:193px">0.00</div><div class="abs cell" style="left:474px;top:193px">0.00</div><div class="abs cell" style="left:564px;top:193px">0.00</div><div class="abs cell" style="left:654px;top:193px">0.00</div>
<div class="abs rl" style="left:19px;top:221px">Dark Days Disc.</div><div class="abs cell" style="left:114px;top:215px">0.00</div><div class="abs cell" style="left:204px;top:215px">0.00</div><div class="abs cell" style="left:294px;top:215px">0.00</div><div class="abs cell" style="left:384px;top:215px">0.00</div><div class="abs cell" style="left:474px;top:215px">0.00</div><div class="abs cell" style="left:564px;top:215px">0.00</div><div class="abs cell" style="left:654px;top:215px">0.00</div>
<div class="abs rl" style="left:19px;top:243px">Total Disc.</div><div class="abs cell sm" style="left:114px;top:237px">0 (0%)</div><div class="abs cell sm" style="left:204px;top:237px">0 (0%)</div><div class="abs cell sm" style="left:294px;top:237px">0 (0%)</div><div class="abs cell sm" style="left:384px;top:237px">0 (0%)</div><div class="abs cell sm" style="left:474px;top:237px">0 (0%)</div><div class="abs cell sm" style="left:564px;top:237px">0 (0%)</div><div class="abs cell sm" style="left:654px;top:237px;font-weight:bold">0 (0%)</div>
<div class="abs rl" style="left:19px;top:265px">MB Disc</div><div class="abs cell sm" style="left:114px;top:259px">0.00</div><div class="abs cell sm" style="left:204px;top:259px">0.00</div><div class="abs cell sm" style="left:294px;top:259px">0.00</div><div class="abs cell sm" style="left:384px;top:259px">0.00</div><div class="abs cell sm" style="left:474px;top:259px">0.00</div><div class="abs cell sm" style="left:564px;top:259px">0.00</div><div class="abs cell sm" style="left:654px;top:259px">0.00</div>
<div class="abs rl" style="left:19px;top:287px">Cost</div><div class="abs cell" style="left:114px;top:281px">0.00</div><div class="abs cell" style="left:204px;top:281px">0.00</div><div class="abs cell" style="left:294px;top:281px">0.00</div><div class="abs cell" style="left:384px;top:281px">0.00</div><div class="abs cell" style="left:474px;top:281px">0.00</div><div class="abs cell" style="left:564px;top:281px">0.00</div><div class="abs cell" style="left:654px;top:281px">0.00</div>
<div class="abs rl" style="left:19px;top:309px">Profit (Margin)</div><div class="abs cell sm" style="left:114px;top:303px">100 (100%)</div><div class="abs cell sm" style="left:204px;top:303px">0 (0%)</div><div class="abs cell sm" style="left:294px;top:303px">0 (0%)</div><div class="abs cell sm" style="left:384px;top:303px">0 (0%)</div><div class="abs cell sm" style="left:474px;top:303px">0 (0%)</div><div class="abs cell sm" style="left:564px;top:303px">100 (100%)</div><div class="abs cell sm" style="left:654px;top:303px">0 (0%)</div>
<div class="abs" style="left:12px;top:281px;width:193px;height:24px;border:2px solid #bf0000"></div>
<div class="abs btn" style="left:796px;top:164px;width:159px;height:23px;line-height:24px;color:#9c9c9c;font-size:12px">Distribute Revenue</div>
<div class="abs" style="left:766px;top:201px;width:235px;height:115px;border:1px solid #b8b8b8"></div>
<div class="abs" style="left:771px;top:196px;padding:0 2px;background:#fff;font-weight:bold;font-size:12px;line-height:14px;white-space:nowrap">Compare With Actual Price</div>
<div class="abs" style="left:774px;top:221px;line-height:14px;white-space:nowrap">Difference Amt</div>
<div class="abs" style="left:774px;top:251px;line-height:14px;white-space:nowrap">% Of Difference</div>
<div class="abs fld" style="left:876px;top:216px;width:110px;height:24px"></div>
<div class="abs fld" style="left:876px;top:246px;width:110px;height:24px"></div>
<div class="abs btn" style="left:886px;top:281px;width:89px;height:23px;line-height:24px;font-size:12px">C<u>a</u>lculate</div>
<svg class="abs" style="left:0;top:333px" width="200" height="26" viewBox="0 333 200 26"><path d="M76.5,356 L76.5,340.5 L82.5,334.5 L134.5,334.5 L134.5,356" fill="#fff" stroke="#75879b" stroke-width="1"/><path d="M78,356 L78,341.4 L83.4,336 L134,336 L134,356 Z" fill="#fb9b4c"/><path d="M10.5,356 L10.5,340.5 L16.5,334.5 L76.5,334.5 L76.5,356" fill="#fff" stroke="#5b80c9" stroke-width="1"/><path d="M12,356 L12,341.4 L17.4,336 L76,336 L76,356 Z" fill="#c74b2b"/></svg>
<div class="abs tabt" style="left:16px;top:339px;color:#fff;font-weight:bold">Item(s)</div><div class="abs tabt" style="left:82px;top:339px">Labor</div>
<div class="abs" style="left:8px;top:356px;width:1059px;height:315px;border:1px solid;border-color:#5b80c9 #75879b #75879b #5b80c9;background:#c9dcf3"></div><div class="abs" style="left:9px;top:357px;width:1057px;height:1px;background:#fff"></div><div class="abs" style="left:10px;top:360px;width:1053px;height:307px;border:1px solid #ababab;background:#fff;box-shadow:1px 1px 0 #fff"></div>
<div class="abs" style="left:11px;top:356px;width:65px;height:2px;background:#c9dcf3"></div>
<div class="abs" style="left:12px;top:362px;width:1049px;height:303px;border:1px solid #75879b;background:#fff"></div>
<div class="abs" style="left:13px;top:363px;width:1047px;height:284px;overflow:hidden;background:#fff"><div class="abs" style="left:0;top:0;width:1047px;height:20px;background:#ff6b3d"></div><div class="abs th" style="left:0px;top:0;width:14px">C</div><div class="abs th" style="left:15px;top:0;width:19px">L</div><div class="abs th" style="left:35px;top:0;width:14px">T</div><div class="abs th" style="left:50px;top:0;width:24px">I.C</div><div class="abs th" style="left:75px;top:0;width:24px">I.I</div><div class="abs th" style="left:100px;top:0;width:24px">I.W</div><div class="abs th" style="left:125px;top:0;width:14px">S</div><div class="abs th" style="left:140px;top:0;width:74px">Status</div><div class="abs th" style="left:215px;top:0;width:44px">Action</div><div class="abs th" style="left:260px;top:0;width:99px">Product ID</div><div class="abs th" style="left:360px;top:0;width:259px">Description</div><div class="abs th" style="left:620px;top:0;width:54px">Duration</div><div class="abs th" style="left:675px;top:0;width:29px">Qty</div><div class="abs th" style="left:705px;top:0;width:59px">Unit Price</div><div class="abs th" style="left:765px;top:0;width:54px">Discount</div><div class="abs th" style="left:820px;top:0;width:59px">Net Disc</div><div class="abs th" style="left:880px;top:0;width:59px">Net Each</div><div class="abs th" style="left:940px;top:0;width:74px">Amount</div><div class="abs th" style="left:1015px;top:0;width:39px">Unit</div><div class="abs" style="left:0;top:38px;width:1047px;height:1px;background:#b86c30"></div><div class="abs td" style="left:0px;top:20px;width:15px;padding-left:1px"></div><div class="abs td" style="left:15px;top:20px;width:20px;padding-left:1px"></div><div class="abs td" style="left:35px;top:20px;width:15px;padding-left:1px"></div><div class="abs td" style="left:50px;top:20px;width:25px;padding-left:1px"></div><div class="abs td" style="left:75px;top:20px;width:25px;padding-left:1px"></div><div class="abs td" style="left:100px;top:20px;width:25px;padding-left:1px"></div><div class="abs td" style="left:125px;top:20px;width:15px;padding-left:1px"></div><div class="abs td" style="left:140px;top:20px;width:75px;padding-left:1px">Deleted</div><div class="abs td" style="left:215px;top:20px;width:45px;padding-left:1px">Rent</div><div class="abs td" style="left:260px;top:20px;width:100px;padding-left:1px">ITEMA#1</div><div class="abs td" style="left:360px;top:20px;width:260px;padding-left:8px">ITEMA#1</div><div class="abs td" style="left:620px;top:20px;width:55px;padding-left:1px">1d</div><div class="abs td" style="left:675px;top:20px;width:30px;text-align:right;padding-right:1px">1</div><div class="abs td" style="left:705px;top:20px;width:60px;text-align:right;padding-right:1px">100.00</div><div class="abs td" style="left:765px;top:20px;width:55px;text-align:right;padding-right:1px">0.00</div><div class="abs td" style="left:820px;top:20px;width:60px;text-align:right;padding-right:1px">0.00</div><div class="abs td" style="left:880px;top:20px;width:60px;text-align:right;padding-right:1px">100.00</div><div class="abs td" style="left:940px;top:20px;width:75px;text-align:right;padding-right:1px">100.00</div><div class="abs td" style="left:1015px;top:20px;width:40px;padding-left:1px">Day</div></div>
<div class="abs cb" style="left:14px;top:386px"></div><div class="abs cb" style="left:32px;top:386px"></div><div class="abs cb" style="left:49px;top:386px"><svg width="10" height="10" viewBox="0 0 10 10" style="position:absolute;left:0;top:0"><path d="M2.1,5 L3.8,8 L9,2.3" fill="none" stroke="#141414" stroke-width="2.3"/></svg></div><div class="abs cb" style="left:69px;top:386px"></div><div class="abs cb" style="left:94px;top:386px"></div><div class="abs cb" style="left:119px;top:386px"></div><div class="abs cb" style="left:139px;top:386px"></div>
<div class="abs" style="left:13px;top:647px;width:1047px;height:16px;background:#eeeeee;border-top:1px solid #75879b;border-bottom:1px solid #75879b;box-shadow:inset 0 1px 0 #dfeaf8, 0 1px 0 #dfe9f6"></div>
<div class="abs" style="left:13px;top:648px;width:15px;height:14px;background:#eeeeee;border:1px solid #fff;border-bottom:none"><svg width="13" height="13" style="position:absolute;left:0;top:0"><path d="M9,3 L4.6,7 L9,11 Z" fill="#1a1a1a"/></svg></div><div class="abs" style="left:1043px;top:647px;width:16px;height:16px;background:#eeeeee;border:1px solid #75879b;box-shadow:inset 1px 1px 0 #fff"><svg width="14" height="14" style="position:absolute;left:0;top:0"><path d="M6,4 L10.4,8 L6,12 Z" fill="#1a1a1a"/></svg></div>
<div class="abs" style="left:28px;top:647px;width:510px;height:16px;border:1px solid #ffc30a;background:linear-gradient(180deg,#f2c6a8 0%,#edb48e 45%,#e8a472 100%);box-shadow:inset 0 1px 0 #e6946a, inset 1px 0 0 #eaa880, inset 0 -1px 0 #eab088"></div>
<div class="abs" style="left:281px;top:651px;width:1px;height:9px;background:#8e7e8c;box-shadow:1px 1px 0 #fad4ba"></div><div class="abs" style="left:283px;top:651px;width:1px;height:9px;background:#8e7e8c;box-shadow:1px 1px 0 #fad4ba"></div><div class="abs" style="left:285px;top:651px;width:1px;height:9px;background:#8e7e8c;box-shadow:1px 1px 0 #fad4ba"></div>
<div class="abs fl" style="left:70px;top:678px">Items</div><div class="abs fld fv" style="left:120px;top:673px;width:100px;height:24px">100.00</div><div class="abs fl" style="left:235px;top:678px">Labor</div><div class="abs fld fv" style="left:287px;top:673px;width:100px;height:24px"></div><div class="abs fl" style="left:446px;top:678px">Sub Total</div><div class="abs fld fv" style="left:525px;top:673px;width:100px;height:24px">100.00</div><div class="abs fl" style="left:636px;top:678px">Tax</div><div class="abs fld fv" style="left:670px;top:673px;width:100px;height:24px">20.00</div><div class="abs" style="left:813px;top:673px;width:89px;height:23px;border:1px solid #b4b4b4;text-align:center;font-weight:bold;font-size:13.5px;letter-spacing:0.2px;line-height:24px;padding-left:2px">Total</div><div class="abs fld fv" style="left:906px;top:673px;width:100px;height:24px">120.00</div>
<div class="abs" style="left:8px;top:707px;width:1059px;height:25px;border:1px solid;border-color:#c2c6ca #fff #fff #b4bcc4;background:#fff"></div><div class="abs" style="left:9px;top:708px;width:1057px;height:23px;border:1px solid;border-color:#828282 #c4c4c4 #c4c4c4 #828282;background:#fff"></div>

</body></html>
